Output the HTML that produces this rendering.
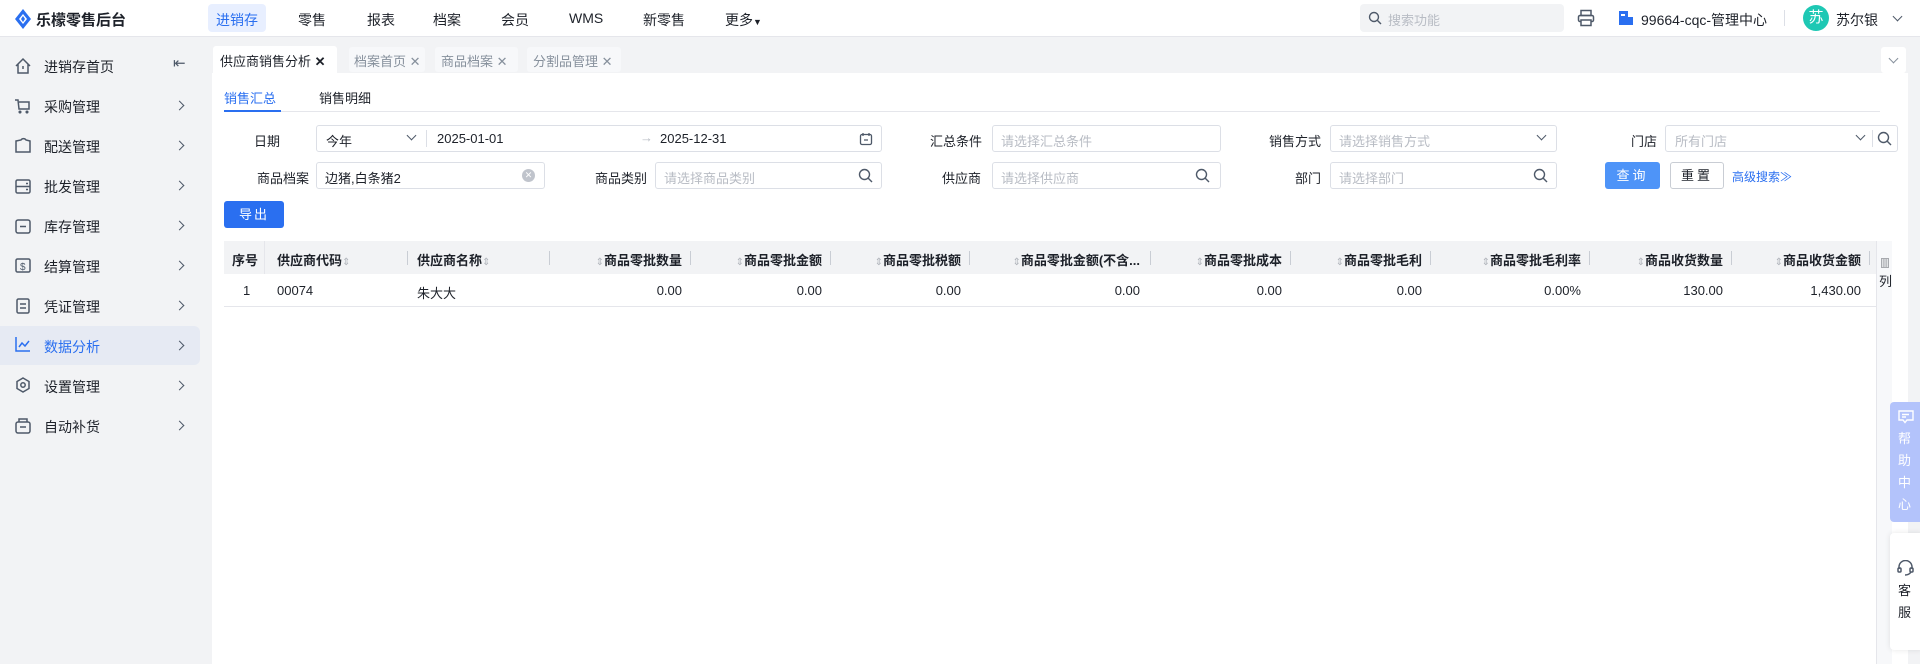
<!DOCTYPE html><html><head><meta charset="utf-8"><style>
*{margin:0;padding:0;box-sizing:border-box}
body{width:1920px;height:664px;overflow:hidden;background:#f2f3f5;font-family:"Liberation Sans","Noto Sans CJK SC",sans-serif;color:#1d2129;position:relative;font-size:13px}
.a{position:absolute;white-space:nowrap}
.top{left:0;top:0;width:1920px;height:37px;background:#fff;border-bottom:1px solid #e5e6eb}
.nav{top:10px;font-size:14px;color:#1d2129}
.side{font-size:14px;color:#1d2129}
.chev{width:7px;height:7px;border-right:1.5px solid #4e5969;border-top:1.5px solid #4e5969;transform:rotate(45deg)}
.inp{height:27px;border:1px solid #dcdfe6;border-radius:3px;background:#fff}
.ph{color:#b8bcc4;font-size:13px}
.lbl{font-size:13px;color:#1d2129;text-align:right}
.th{top:250px;font-size:13px;font-weight:bold;color:#1d2129}
.td{top:283px;font-size:13px;color:#1d2129}
.dv{top:251px;width:1px;height:14px;background:#c9cdd4}
.srt{color:#b0b4bb;font-size:10px;font-weight:normal}
</style></head><body>
<div class="a top"></div>
<svg class="a" style="left:14px;top:9px" width="18" height="20" viewBox="0 0 18 20"><path d="M9 0L17 10L9 20L1 10Z" fill="#2a6ff0"/><path d="M9 5L13 10L9 15L5 10Z" fill="#fff"/><path d="M9 7L11 10L9 13L7 10Z" fill="#2a6ff0"/></svg>
<div class="a" style="left:36px;top:9px;font-size:15px;font-weight:bold">乐檬零售后台</div>
<div class="a" style="left:208px;top:4px;width:58px;height:28px;background:#e8efff;border-radius:4px"></div>
<div class="a nav" style="left:216px;color:#2a6ff0">进销存</div>
<div class="a nav" style="left:298px">零售</div>
<div class="a nav" style="left:367px">报表</div>
<div class="a nav" style="left:433px">档案</div>
<div class="a nav" style="left:501px">会员</div>
<div class="a nav" style="left:569px">WMS</div>
<div class="a nav" style="left:643px">新零售</div>
<div class="a nav" style="left:725px">更多<span style="font-size:9px">▼</span></div>
<div class="a" style="left:1360px;top:4px;width:204px;height:28px;background:#f2f3f5;border-radius:4px"></div>
<svg class="a" style="left:1368px;top:11px" width="14" height="14"><circle cx="6" cy="6" r="4.5" fill="none" stroke="#4e5969" stroke-width="1.4"/><path d="M9.5 9.5L13 13" stroke="#4e5969" stroke-width="1.4"/></svg>
<div class="a ph" style="left:1388px;top:10px">搜索功能</div>
<svg class="a" style="left:1577px;top:9px" width="18" height="18"><rect x="4" y="1.5" width="10" height="5" fill="none" stroke="#4e5969" stroke-width="1.5"/><rect x="1.5" y="6.5" width="15" height="6" rx="1.5" fill="none" stroke="#4e5969" stroke-width="1.5"/><rect x="4" y="11" width="10" height="5.5" fill="#fff" stroke="#4e5969" stroke-width="1.5"/></svg>
<svg class="a" style="left:1618px;top:10px" width="16" height="16"><rect x="1" y="1" width="9" height="14" fill="#2a6ff0"/><rect x="10" y="7" width="5" height="8" fill="#2a6ff0"/><rect x="3" y="4" width="4" height="2" fill="#fff"/></svg>
<div class="a" style="left:1641px;top:10px;font-size:14px">99664-cqc-管理中心</div>
<div class="a" style="left:1784px;top:10px;width:1px;height:16px;background:#dcdfe6"></div>
<div class="a" style="left:1803px;top:5px;width:26px;height:26px;border-radius:50%;background:#1ec8b4;color:#fff;font-size:15px;text-align:center;line-height:26px">苏</div>
<div class="a" style="left:1836px;top:10px;font-size:14px">苏尔银</div>
<div class="a chev" style="left:1894px;top:13px;transform:rotate(135deg)"></div>

<!-- sidebar -->
<div class="a" style="left:0;top:326px;width:200px;height:39px;background:#e6eaf3;border-radius:0 6px 6px 0"></div>
<svg class="a" style="left:14px;top:57px" width="18" height="18"><path d="M2 9L9 2L16 9M4 7V16H14V7" fill="none" stroke="#4e5969" stroke-width="1.5"/><path d="M9 9V12" stroke="#4e5969" stroke-width="1.5"/></svg>
<div class="a side" style="left:44px;top:57px">进销存首页</div>
<div class="a" style="left:173px;top:54px;font-size:15px;color:#4e5969">⇤</div>
<div class="a side" style="left:44px;top:97px">采购管理</div>
<div class="a side" style="left:44px;top:137px">配送管理</div>
<div class="a side" style="left:44px;top:177px">批发管理</div>
<div class="a side" style="left:44px;top:217px">库存管理</div>
<div class="a side" style="left:44px;top:257px">结算管理</div>
<div class="a side" style="left:44px;top:297px">凭证管理</div>
<div class="a side" style="left:44px;top:337px;color:#2a6ff0">数据分析</div>
<div class="a side" style="left:44px;top:377px">设置管理</div>
<div class="a side" style="left:44px;top:417px">自动补货</div>
<svg class="a" style="left:14px;top:97px" width="18" height="340" fill="none" stroke="#4e5969" stroke-width="1.5">
<path d="M1 3H4L5 12H15L15 5H5"/><circle cx="6" cy="15" r=".8"/><circle cx="13" cy="15" r=".8"/>
<path d="M2 44V55H16V44L12 43A3 3 0 0 0 7 43Z"/>
<rect x="2" y="83" width="14" height="13" rx="1.5"/><path d="M2 89.5H16M12 86.5H14M12 92.5H14"/>
<rect x="2" y="123" width="14" height="13" rx="2"/><path d="M6 129.5H12"/>
<rect x="2" y="162" width="14" height="13" rx="1.5"/><text x="6" y="173" font-size="10" fill="#4e5969" stroke="none">$</text>
<rect x="3" y="202" width="12" height="14" rx="1.5"/><path d="M6 207H12M6 211H12"/>
<path d="M2 240V254H16M5 250L8 246L11 249L15 244" stroke="#2a6ff0"/>
<path d="M9 281L15 284.5V291.5L9 295L3 291.5V284.5Z"/><circle cx="9" cy="288" r="2.2"/>
<rect x="2" y="325" width="14" height="11" rx="2"/><path d="M5 325V322H13V325M6 330H12"/>
</svg>
<div class="a chev" style="left:176px;top:102px"></div><div class="a chev" style="left:176px;top:142px"></div><div class="a chev" style="left:176px;top:182px"></div><div class="a chev" style="left:176px;top:222px"></div><div class="a chev" style="left:176px;top:262px"></div><div class="a chev" style="left:176px;top:302px"></div><div class="a chev" style="left:176px;top:342px"></div><div class="a chev" style="left:176px;top:382px"></div><div class="a chev" style="left:176px;top:422px"></div>

<!-- tabs -->
<div class="a" style="left:213px;top:46px;width:124px;height:27px;background:#fff;border-radius:3px 3px 0 0"></div>
<div class="a" style="left:220px;top:51px;font-size:13px">供应商销售分析 <b>✕</b></div>
<div class="a" style="left:349px;top:47px;width:76px;height:25px;background:#f7f8fa;border-radius:3px"></div>
<div class="a" style="left:354px;top:51px;font-size:13px;color:#86909c">档案首页 ✕</div>
<div class="a" style="left:435px;top:47px;width:83px;height:25px;background:#f7f8fa;border-radius:3px"></div>
<div class="a" style="left:441px;top:51px;font-size:13px;color:#86909c">商品档案 ✕</div>
<div class="a" style="left:527px;top:47px;width:94px;height:25px;background:#f7f8fa;border-radius:3px"></div>
<div class="a" style="left:533px;top:51px;font-size:13px;color:#86909c">分割品管理 ✕</div>
<div class="a" style="left:1881px;top:47px;width:25px;height:26px;background:#fff;border-radius:3px"></div>
<div class="a chev" style="left:1890px;top:55px;transform:rotate(135deg);border-color:#86909c"></div>

<!-- content -->
<div class="a" style="left:212px;top:73px;width:1696px;height:591px;background:#fff"></div>
<div class="a" style="left:224px;top:88px;font-size:13px;color:#2a6ff0">销售汇总</div>
<div class="a" style="left:319px;top:88px;font-size:13px">销售明细</div>
<div class="a" style="left:224px;top:111px;width:1656px;height:1px;background:#e5e6eb"></div>
<div class="a" style="left:224px;top:110px;width:57px;height:2px;background:#2a6ff0"></div>

<div class="a lbl" style="left:254px;top:131px;width:20px">日期</div>
<div class="a inp" style="left:316px;top:125px;width:566px"></div>
<div class="a" style="left:326px;top:131px">今年</div>
<div class="a chev" style="left:408px;top:132px;transform:rotate(135deg)"></div>
<div class="a" style="left:426px;top:130px;width:1px;height:17px;background:#dcdfe6"></div>
<div class="a" style="left:437px;top:131px">2025-01-01</div>
<div class="a" style="left:640px;top:130px;color:#b8bcc4">→</div>
<div class="a" style="left:660px;top:131px">2025-12-31</div>
<svg class="a" style="left:859px;top:132px" width="14" height="14" fill="none" stroke="#4e5969" stroke-width="1.3"><rect x="1.5" y="2.5" width="11" height="10" rx="1.5"/><path d="M4 1V4M10 1V4M5 8H9"/></svg>
<div class="a lbl" style="left:922px;top:131px;width:60px">汇总条件</div>
<div class="a inp" style="left:992px;top:125px;width:229px"></div>
<div class="a ph" style="left:1001px;top:131px">请选择汇总条件</div>
<div class="a lbl" style="left:1261px;top:131px;width:60px">销售方式</div>
<div class="a inp" style="left:1330px;top:125px;width:227px"></div>
<div class="a ph" style="left:1339px;top:131px">请选择销售方式</div>
<div class="a chev" style="left:1538px;top:132px;transform:rotate(135deg)"></div>
<div class="a lbl" style="left:1627px;top:131px;width:30px">门店</div>
<div class="a inp" style="left:1665px;top:125px;width:233px"></div>
<div class="a ph" style="left:1675px;top:131px">所有门店</div>
<div class="a chev" style="left:1857px;top:132px;transform:rotate(135deg)"></div>
<div class="a" style="left:1872px;top:130px;width:1px;height:17px;background:#dcdfe6"></div>
<svg class="a" style="left:1877px;top:131px" width="15" height="15"><circle cx="6.5" cy="6.5" r="5" fill="none" stroke="#4e5969" stroke-width="1.4"/><path d="M10 10L14 14" stroke="#4e5969" stroke-width="1.4"/></svg>

<div class="a lbl" style="left:249px;top:168px;width:60px">商品档案</div>
<div class="a inp" style="left:316px;top:162px;width:229px"></div>
<div class="a" style="left:325px;top:168px">边猪,白条猪2</div>
<div class="a" style="left:522px;top:169px;width:13px;height:13px;border-radius:50%;background:#c0c4cc;color:#fff;font-size:9px;text-align:center;line-height:13px">✕</div>
<div class="a lbl" style="left:587px;top:168px;width:60px">商品类别</div>
<div class="a inp" style="left:655px;top:162px;width:227px"></div>
<div class="a ph" style="left:664px;top:168px">请选择商品类别</div>
<div class="a lbl" style="left:921px;top:168px;width:60px">供应商</div>
<div class="a inp" style="left:992px;top:162px;width:229px"></div>
<div class="a ph" style="left:1001px;top:168px">请选择供应商</div>
<div class="a lbl" style="left:1281px;top:168px;width:40px">部门</div>
<div class="a inp" style="left:1330px;top:162px;width:227px"></div>
<div class="a ph" style="left:1339px;top:168px">请选择部门</div>
<svg class="a" style="left:1195px;top:168px" width="15" height="15"><circle cx="6.5" cy="6.5" r="5" fill="none" stroke="#4e5969" stroke-width="1.4"/><path d="M10 10L14 14" stroke="#4e5969" stroke-width="1.4"/></svg>
<svg class="a" style="left:858px;top:168px" width="15" height="15"><circle cx="6.5" cy="6.5" r="5" fill="none" stroke="#4e5969" stroke-width="1.4"/><path d="M10 10L14 14" stroke="#4e5969" stroke-width="1.4"/></svg>
<svg class="a" style="left:1533px;top:168px" width="15" height="15"><circle cx="6.5" cy="6.5" r="5" fill="none" stroke="#4e5969" stroke-width="1.4"/><path d="M10 10L14 14" stroke="#4e5969" stroke-width="1.4"/></svg>
<div class="a" style="left:1605px;top:162px;width:55px;height:27px;background:#4e94f8;border-radius:3px;color:#fff;font-size:13px;text-align:center;line-height:27px;letter-spacing:3px">查询</div>
<div class="a" style="left:1670px;top:162px;width:54px;height:27px;border:1px solid #c9cdd4;border-radius:3px;font-size:13px;text-align:center;line-height:25px;letter-spacing:3px">重置</div>
<div class="a" style="left:1732px;top:168px;font-size:12px;color:#2a6ff0">高级搜索≫</div>

<div class="a" style="left:224px;top:201px;width:60px;height:27px;background:#2a6ff0;border-radius:3px;color:#fff;font-size:13px;text-align:center;line-height:27px;letter-spacing:2px">导出</div>

<div class="a" style="left:224px;top:241px;width:1652px;height:33px;background:#f2f3f5"></div>
<div class="a" style="left:224px;top:306px;width:1652px;height:1px;background:#e5e6eb"></div>
<div class="a" style="left:264px;top:241px;width:1px;height:33px;background:#e5e6eb"></div>
<div class="a" style="left:1876px;top:241px;width:16px;height:423px;background:#f7f8fa;border-left:1px solid #e5e6eb"></div>
<div class="a" style="left:1880px;top:255px;font-size:10px">▥</div>
<div class="a" style="left:1879px;top:271px;font-size:13px">列</div>
<div class="a th" style="left:232px">序号</div>
<div class="a th" style="left:277px">供应商代码<span class="srt">⇕</span></div>
<div class="a dv" style="left:407px"></div>
<div class="a th" style="left:417px">供应商名称<span class="srt">⇕</span></div>
<div class="a dv" style="left:549px"></div>
<div class="a th" style="left:589px;width:93px;text-align:right"><span class="srt">⇕</span>商品零批数量</div><div class="a dv" style="left:690px"></div>
<div class="a th" style="left:729px;width:93px;text-align:right"><span class="srt">⇕</span>商品零批金额</div><div class="a dv" style="left:830px"></div>
<div class="a th" style="left:868px;width:93px;text-align:right"><span class="srt">⇕</span>商品零批税额</div><div class="a dv" style="left:969px"></div>
<div class="a th" style="left:1000px;width:140px;text-align:right"><span class="srt">⇕</span>商品零批金额(不含...</div><div class="a dv" style="left:1150px"></div>
<div class="a th" style="left:1189px;width:93px;text-align:right"><span class="srt">⇕</span>商品零批成本</div><div class="a dv" style="left:1290px"></div>
<div class="a th" style="left:1329px;width:93px;text-align:right"><span class="srt">⇕</span>商品零批毛利</div><div class="a dv" style="left:1430px"></div>
<div class="a th" style="left:1470px;width:111px;text-align:right"><span class="srt">⇕</span>商品零批毛利率</div><div class="a dv" style="left:1589px"></div>
<div class="a th" style="left:1630px;width:93px;text-align:right"><span class="srt">⇕</span>商品收货数量</div><div class="a dv" style="left:1731px"></div>
<div class="a th" style="left:1768px;width:93px;text-align:right"><span class="srt">⇕</span>商品收货金额</div><div class="a dv" style="left:1869px"></div>
<div class="a td" style="left:243px">1</div>
<div class="a td" style="left:277px">00074</div>
<div class="a td" style="left:417px">朱大大</div>
<div class="a td" style="left:582px;width:100px;text-align:right">0.00</div>
<div class="a td" style="left:722px;width:100px;text-align:right">0.00</div>
<div class="a td" style="left:861px;width:100px;text-align:right">0.00</div>
<div class="a td" style="left:1040px;width:100px;text-align:right">0.00</div>
<div class="a td" style="left:1182px;width:100px;text-align:right">0.00</div>
<div class="a td" style="left:1322px;width:100px;text-align:right">0.00</div>
<div class="a td" style="left:1481px;width:100px;text-align:right">0.00%</div>
<div class="a td" style="left:1623px;width:100px;text-align:right">130.00</div>
<div class="a td" style="left:1761px;width:100px;text-align:right">1,430.00</div>

<div class="a" style="left:1890px;top:402px;width:32px;height:120px;background:#b3c3fb;border-radius:4px 0 0 4px"></div>
<svg class="a" style="left:1898px;top:410px" width="16" height="14" fill="none" stroke="#fff" stroke-width="1.4"><path d="M1 1H15V10H9L7 12.5L5 10H1Z"/><path d="M4 4.5H11M4 7H8"/></svg>
<div class="a" style="left:1898px;top:428px;font-size:13px;color:#fff;line-height:22px;white-space:normal;width:15px">帮助中心</div>
<div class="a" style="left:1890px;top:533px;width:32px;height:117px;background:#fff;border-radius:4px 0 0 4px;box-shadow:0 0 6px rgba(0,0,0,.1)"></div>
<svg class="a" style="left:1897px;top:560px" width="17" height="16" fill="none" stroke="#4e5969" stroke-width="1.5"><path d="M2 9V7A6.5 6.5 0 0 1 15 7V9"/><rect x="1" y="8" width="3" height="4" rx="1"/><rect x="13" y="8" width="3" height="4" rx="1"/><path d="M14 12Q12 15 8 15"/></svg>
<div class="a" style="left:1898px;top:580px;font-size:13px;line-height:22px;white-space:normal;width:15px">客服</div>
</body></html>
